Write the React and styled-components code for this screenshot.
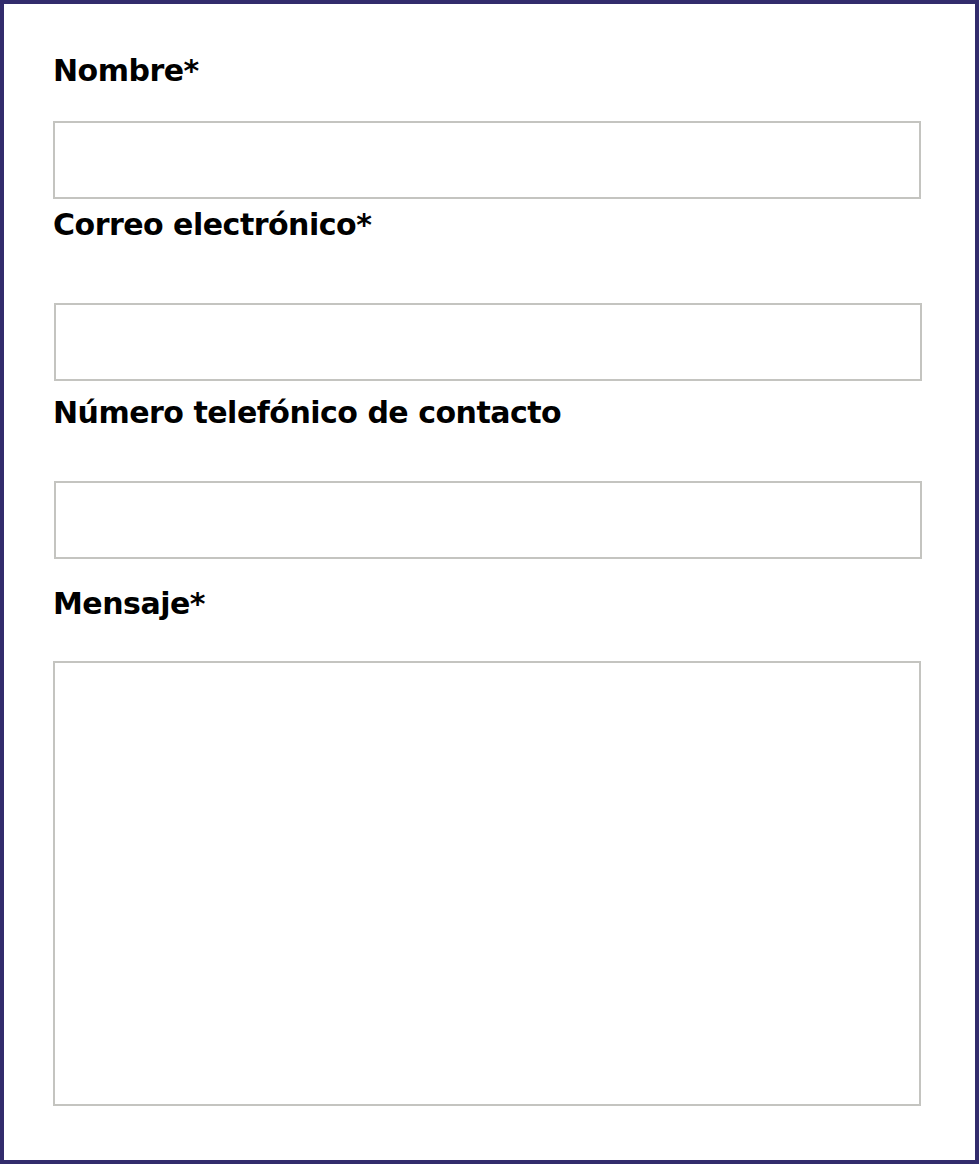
import React from 'react';
import styled, { createGlobalStyle } from 'styled-components';

const GlobalStyle = createGlobalStyle`
  * {
    box-sizing: border-box;
  }

  body {
    margin: 0;
    background: #ffffff;
    font-family: 'DejaVu Sans', Verdana, sans-serif;
  }
`;

const fields = [
  { id: 'nombre', label: 'Nombre*', above: 0, below: 33, height: 78 },
  { id: 'correo', label: 'Correo electrónico*', above: 8, below: 61, height: 78, shift: 1 },
  { id: 'telefono', label: 'Número telefónico de contacto', above: 14, below: 51, height: 78, shift: 1 },
  { id: 'mensaje', label: 'Mensaje*', above: 27, below: 40, height: 445, multiline: true },
];

const ContactForm = () => {
  return (
    <>
      <GlobalStyle />
      <Frame>
        {fields.map((field) => (
          <Field key={field.id}>
            <Label htmlFor={field.id} $above={field.above} $below={field.below}>
              {field.label}
            </Label>
            {field.multiline ? (
              <TextArea id={field.id} $height={field.height} />
            ) : (
              <TextInput id={field.id} type="text" $height={field.height} $shift={field.shift || 0} />
            )}
          </Field>
        ))}
      </Frame>
    </>
  );
};

export default ContactForm;

const Frame = styled.form`
  display: flex;
  flex-direction: column;
  height: 100vh;
  padding: 49px 54px 0 49px;
  border: 4px solid #322c6c;
  background: #ffffff;
`;

const Field = styled.div`
  display: flex;
  flex-direction: column;
`;

const Label = styled.label`
  display: block;
  margin: ${({ $above }) => $above}px 0 ${({ $below }) => $below}px 0;
  font-size: 30px;
  line-height: 35px;
  font-weight: 700;
  letter-spacing: -0.5px;
  color: #000000;
`;

const TextInput = styled.input`
  display: block;
  width: 868px;
  height: ${({ $height }) => $height}px;
  margin: 0 0 0 ${({ $shift }) => $shift}px;
  padding: 0 12px;
  border: 2px solid #c4c4c0;
  border-radius: 0;
  font: inherit;
  font-size: 20px;
  outline: none;
  background: #ffffff;
`;

const TextArea = styled.textarea`
  display: block;
  width: 868px;
  height: ${({ $height }) => $height}px;
  margin: 0;
  padding: 12px;
  border: 2px solid #c4c4c0;
  border-radius: 0;
  font: inherit;
  font-size: 20px;
  resize: none;
  outline: none;
  background: #ffffff;
`;
